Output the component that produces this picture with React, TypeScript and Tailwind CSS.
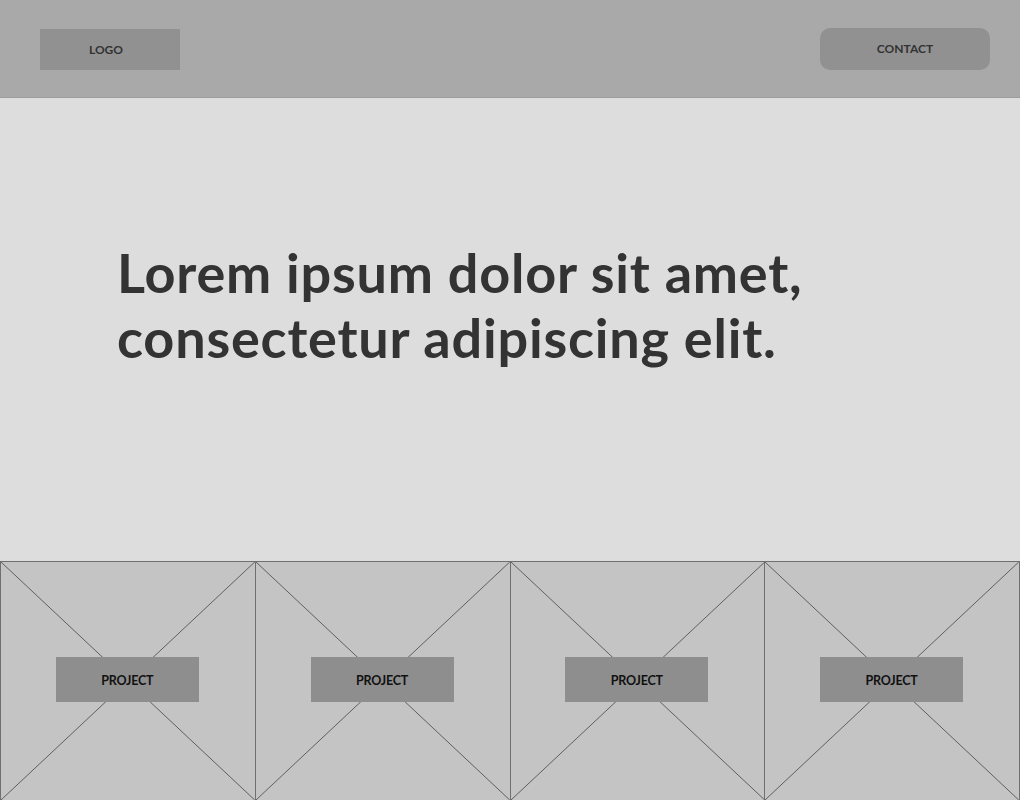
import React from 'react';

const projects = ['PROJECT', 'PROJECT', 'PROJECT', 'PROJECT'];

const ProjectTile: React.FC<{ label: string }> = ({ label }) => (
    <div className="relative h-[239px] border-r border-b border-[#6f6f6f] bg-[#c4c4c4] flex items-center justify-center pb-[4px] pr-[1px]">
        {/* placeholder cross */}
        <svg className="absolute inset-0 w-full h-full" viewBox="0 0 100 100" preserveAspectRatio="none">
            <line x1="0" y1="0" x2="100" y2="100" stroke="#5f5f5f" strokeWidth="1" vectorEffect="non-scaling-stroke" />
            <line x1="100" y1="0" x2="0" y2="100" stroke="#5f5f5f" strokeWidth="1" vectorEffect="non-scaling-stroke" />
        </svg>
        <div className="relative w-[143px] h-[45px] pt-[4px] bg-[#8e8e8e] flex items-center justify-center text-[12.5px] font-bold text-[#111] tracking-[-0.2px]">
            {label}
        </div>
    </div>
);

const App: React.FC = () => {
    return (
        <div className="w-[1020px] h-[800px] overflow-hidden bg-[#dddddd]" style={{ fontFamily: 'Lato, "Open Sans", sans-serif' }}>
            <header className="h-[98px] bg-[#a9a9a9] border-b border-[#9d9d9d] flex items-start justify-between pt-[28px] pl-[40px] pr-[30px]">
                <div className="mt-[1px] w-[140px] h-[41px] bg-[#919191] flex items-center justify-center text-[12px] font-bold text-[#333] pr-[8px]">
                    LOGO
                </div>
                <button className="w-[170px] h-[42px] rounded-[10px] bg-[#919191] flex items-center justify-center text-[12px] font-bold text-[#333]">
                    CONTACT
                </button>
            </header>

            <section className="h-[463px] pl-[117px] pt-[142px]">
                <h1 className="text-[54px] leading-[65px] font-bold text-[#333333] tracking-[0.8px]">
                    Lorem ipsum dolor sit amet,
                    <br />
                    consectetur adipiscing elit.
                </h1>
            </section>

            <div className="grid grid-cols-4 border-t border-l border-[#6f6f6f]">
                {projects.map((p, i) => (
                    <ProjectTile key={i} label={p} />
                ))}
            </div>
        </div>
    );
};

export default App;
